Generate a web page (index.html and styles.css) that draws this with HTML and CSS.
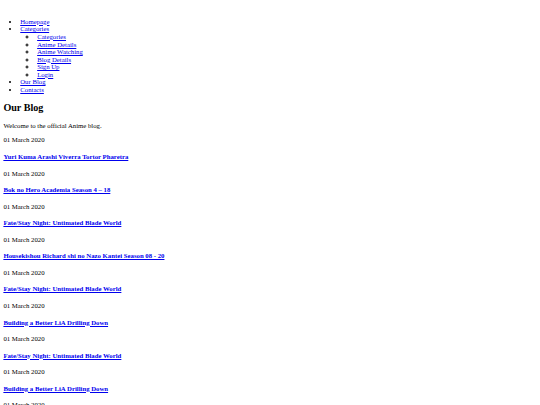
FILE: index.html
```html
<!DOCTYPE html>
<html lang="en">
<head>
<meta charset="utf-8">
<title>Anime | Blog</title>
<link rel="stylesheet" href="styles.css">
</head>
<body class="page">
<header class="header">
  <div class="header-logo"><a href="#" class="logo-link"><span class="logo"></span></a></div>
  <nav class="header-menu">
    <ul class="menu">
      <li><a href="#">Homepage</a></li>
      <li><a href="#">Categories</a>
        <ul class="submenu">
          <li><a href="#">Categories</a></li>
          <li><a href="#">Anime Details</a></li>
          <li><a href="#">Anime Watching</a></li>
          <li><a href="#">Blog Details</a></li>
          <li><a href="#">Sign Up</a></li>
          <li><a href="#">Login</a></li>
        </ul>
      </li>
      <li><a href="#">Our Blog</a></li>
      <li><a href="#">Contacts</a></li>
    </ul>
  </nav>
</header>
<section class="blog">
  <h2 class="blog-title">Our Blog</h2>
  <p class="blog-intro">Welcome to the official Anime blog.</p>
  <div class="post"><p class="post-date">01 March 2020</p><h4 class="post-title"><a href="#">Yuri Kuma Arashi Viverra Tortor Pharetra</a></h4></div>
  <div class="post"><p class="post-date">01 March 2020</p><h4 class="post-title"><a href="#">Bok no Hero Academia Season 4 – 18</a></h4></div>
  <div class="post"><p class="post-date">01 March 2020</p><h4 class="post-title"><a href="#">Fate/Stay Night: Untimated Blade World</a></h4></div>
  <div class="post"><p class="post-date">01 March 2020</p><h4 class="post-title"><a href="#">Housekishou Richard shi no Nazo Kantei Season 08 - 20</a></h4></div>
  <div class="post"><p class="post-date">01 March 2020</p><h4 class="post-title"><a href="#">Fate/Stay Night: Untimated Blade World</a></h4></div>
  <div class="post"><p class="post-date">01 March 2020</p><h4 class="post-title"><a href="#">Building a Better LiA Drilling Down</a></h4></div>
  <div class="post"><p class="post-date">01 March 2020</p><h4 class="post-title"><a href="#">Fate/Stay Night: Untimated Blade World</a></h4></div>
  <div class="post"><p class="post-date">01 March 2020</p><h4 class="post-title"><a href="#">Building a Better LiA Drilling Down</a></h4></div>
  <div class="post"><p class="post-date">01 March 2020</p><h4 class="post-title"><a href="#">Yuri Kuma Arashi Viverra Tortor Pharetra</a></h4></div>
</section>
</body>
</html>
```
FILE: styles.css
```css
html {
  font-family: "Liberation Serif", "Times New Roman", serif;
  font-size: 6.75px;
  line-height: 7.6px;
  color: #000;
  background: #fff;
}
.page {
  margin: 3.375px;
}
.logo {
  display: inline-block;
}
.menu {
  margin: 1em 0;
  padding-left: 2.5em;
  list-style: disc;
}
.submenu {
  margin: 0;
  padding-left: 2.5em;
  list-style: circle;
}
a {
  color: #0000ee;
}
.blog-title {
  font-size: 1.5em;
  line-height: 11.6px;
  margin: 0.83em 0;
}
.blog-intro,
.post-date {
  margin: 1em 0;
}
.post-title {
  font-size: 1em;
  margin: 1.33em 0;
}
```
